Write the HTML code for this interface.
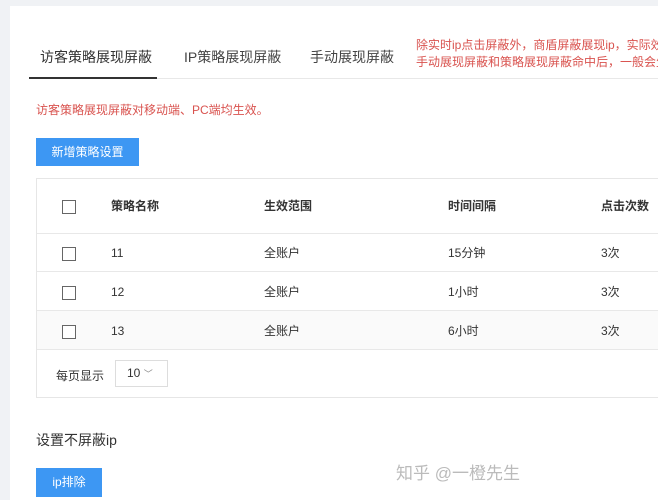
<!DOCTYPE html><html><head><meta charset="utf-8"><style>
body{margin:0;width:658px;height:500px;overflow:hidden;background:#f0f2f5;font-family:"Liberation Sans","Noto Sans CJK SC",sans-serif;position:relative}
.main{position:absolute;left:10px;top:6px;right:0;bottom:0;background:#fff}
.a{position:absolute;white-space:nowrap}
.cb{position:absolute;left:62px;width:12px;height:12px;border:1px solid #666;background:#fff}
.row{position:absolute;left:37px;right:0;border-bottom:1px solid #e8e8e8;font-size:12px;color:#333}
.row .a{top:0}
</style></head><body>
<div class="main"></div>
<div class="a" style="left:40px;top:47px;font-size:14px;color:#333">访客策略展现屏蔽</div>
<div class="a" style="left:184px;top:47px;font-size:14px;color:#444">IP策略展现屏蔽</div>
<div class="a" style="left:310px;top:47px;font-size:14px;color:#444">手动展现屏蔽</div>
<div class="a" style="left:416px;top:37px;font-size:12px;color:#d9534f;line-height:17px">除实时ip点击屏蔽外，商盾屏蔽展现ip，实际效<br>手动展现屏蔽和策略展现屏蔽命中后，一般会生</div>
<div class="a" style="left:29px;top:78px;width:629px;height:1px;background:#e8e8e8"></div>
<div class="a" style="left:29px;top:77px;width:128px;height:2px;background:#333"></div>
<div class="a" style="left:36px;top:101px;font-size:12px;color:#d9534f">访客策略展现屏蔽对移动端、PC端均生效。</div>
<div class="a" style="left:36px;top:138px;width:103px;height:28px;background:#3d97f3;color:#fff;font-size:12px;line-height:28px;text-align:center">新增策略设置</div>
<div class="a" style="left:36px;top:178px;right:0;height:220px;border:1px solid #e6e6e6;border-right:none;box-sizing:border-box"></div>
<div class="row" style="top:179px;height:54px;line-height:54px;background:#fff">
<div class="a" style="left:74px;font-weight:bold">策略名称</div><div class="a" style="left:227px;font-weight:bold">生效范围</div><div class="a" style="left:411px;font-weight:bold">时间间隔</div><div class="a" style="left:564px;font-weight:bold">点击次数</div></div>
<div class="cb" style="top:200px"></div>
<div class="row" style="top:233px;height:38px;line-height:40px"><div class="a" style="left:74px">11</div><div class="a" style="left:227px">全账户</div><div class="a" style="left:411px">15分钟</div><div class="a" style="left:564px">3次</div></div>
<div class="cb" style="top:247px"></div>
<div class="row" style="top:272px;height:38px;line-height:40px"><div class="a" style="left:74px">12</div><div class="a" style="left:227px">全账户</div><div class="a" style="left:411px">1小时</div><div class="a" style="left:564px">3次</div></div>
<div class="cb" style="top:286px"></div>
<div class="row" style="top:311px;height:38px;line-height:40px;background:#fafafa"><div class="a" style="left:74px">13</div><div class="a" style="left:227px">全账户</div><div class="a" style="left:411px">6小时</div><div class="a" style="left:564px">3次</div></div>
<div class="cb" style="top:325px"></div>
<div class="a" style="left:56px;top:367px;font-size:12px;color:#333">每页显示</div>
<div class="a" style="left:115px;top:360px;width:53px;height:27px;border:1px solid #ddd;box-sizing:border-box;font-size:12px;color:#333;line-height:25px;padding-left:11px">10 <span style="font-size:9px;color:#888">﹀</span></div>
<div class="a" style="left:36px;top:430px;font-size:14px;color:#333">设置不屏蔽ip</div>
<div class="a" style="left:36px;top:468px;width:66px;height:29px;background:#3d97f3;color:#fff;font-size:12px;line-height:29px;text-align:center">ip排除</div>
<div class="a" style="left:396px;top:459px;font-size:17px;color:#bbb">知乎 @一橙先生</div>
</body></html>
